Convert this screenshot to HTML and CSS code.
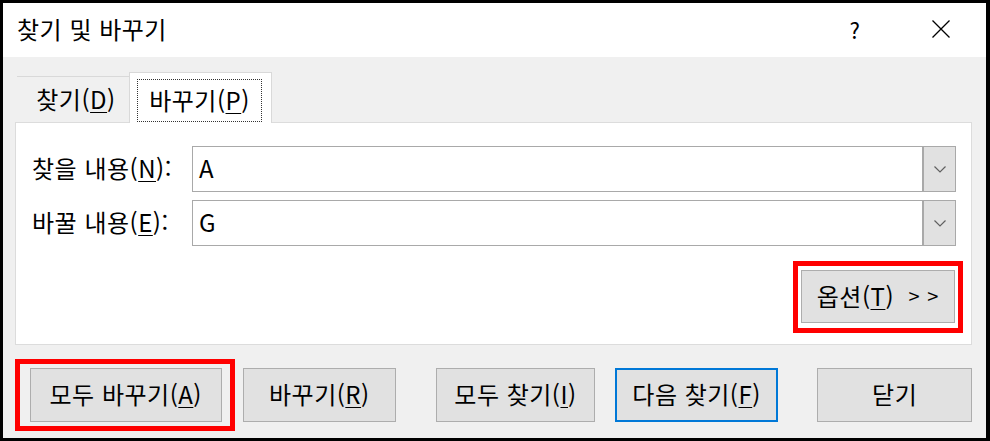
FILE: index.html
```html
<!DOCTYPE html>
<html lang="ko">
<head>
<meta charset="utf-8">
<title>찾기 및 바꾸기</title>
<link rel="stylesheet" href="styles.css">
</head>
<body>
<div class="dialog">
  <div class="titlebar">
    <span class="title">찾기 및 바꾸기</span>
    <span class="help">?</span>
    <span class="close">
      <svg width="18" height="18" viewBox="0 0 18 18"><path d="M0.5 0.5 L17.5 17.5 M17.5 0.5 L0.5 17.5" stroke="#000" stroke-width="1.3" fill="none"/></svg>
    </span>
  </div>
  <div class="body">
    <div class="tabs">
      <div class="tab">찾기(<u>D</u>)</div>
      <div class="tab active"><span class="focus">바꾸기(<u>P</u>)</span></div>
    </div>
    <div class="panel">
      <div class="row">
        <span class="label">찾을 내용(<u>N</u>):</span>
        <div class="combo">
          <span class="val">A</span>
          <span class="drop"><svg width="12" height="7" viewBox="0 0 12 7"><path d="M0.5 0.5 L6 6 L11.5 0.5" stroke="#606060" stroke-width="1.2" fill="none"/></svg></span>
        </div>
      </div>
      <div class="row">
        <span class="label">바꿀 내용(<u>E</u>):</span>
        <div class="combo">
          <span class="val">G</span>
          <span class="drop"><svg width="12" height="7" viewBox="0 0 12 7"><path d="M0.5 0.5 L6 6 L11.5 0.5" stroke="#606060" stroke-width="1.2" fill="none"/></svg></span>
        </div>
      </div>
      <div class="opt-row">
        <div class="btn opt hl-opt">옵션(<u>T</u>)&nbsp;&nbsp;<span class="gt">&gt; &gt;</span></div>
      </div>
    </div>
    <div class="buttons">
      <div class="btn b1 hl-all">모두 바꾸기(<u>A</u>)</div>
      <div class="btn b2">바꾸기(<u>R</u>)</div>
      <div class="btn b3">모두 찾기(<u>I</u>)</div>
      <div class="btn b4 default">다음 찾기(<u>F</u>)</div>
      <div class="btn b5">닫기</div>
    </div>
  </div>
</div>
</body>
</html>
```

FILE: styles.css
```css
* { box-sizing: border-box; }
html, body { margin: 0; padding: 0; }
body {
  width: 990px;
  height: 441px;
  overflow: hidden;
  background: #000;
  font-family: "Noto Sans CJK KR", "Noto Sans", sans-serif;
  font-size: 24px;
  letter-spacing: 0.5px;
  color: #000;
}
u { text-decoration: underline; text-underline-offset: 3px; text-decoration-thickness: 1px; }

.dialog {
  width: 990px;
  height: 441px;
  border-style: solid;
  border-color: #000;
  border-width: 3px 4px 3px 3px;
  background: #f0f0f0;
  display: flex;
  flex-direction: column;
}

.titlebar {
  height: 54px;
  background: #fff;
  display: flex;
  align-items: center;
  padding-left: 14px;
  line-height: 1;
}
.title { flex: 1; padding-bottom: 2px; }
.help { width: 20px; text-align: center; margin-right: 67px; padding-bottom: 2px; font-size: 22px; }
.close { width: 18px; height: 18px; margin-right: 36px; display: flex; margin-top: -2px; }

.body {
  padding: 0 14px 0 12px;
  display: flex;
  flex-direction: column;
}

.tabs {
  margin-top: 15px;
  padding-left: 2px;
  display: flex;
  align-items: flex-end;
  height: 51px;
  margin-bottom: -1px;
}
.tab {
  width: 112px;
  height: 47px;
  border-top: 1px solid #d9d9d9;
  display: flex;
  align-items: center;
  justify-content: center;
  padding-left: 6px;
  padding-bottom: 2px;
  line-height: 1;
}
.tab.active {
  width: 143px;
  height: 51px;
  padding: 6px 9px 1px 7px;
  background: #fff;
  border: 1px solid #d9d9d9;
  border-bottom: none;
  position: relative;
  z-index: 1;
  align-items: stretch;
}
.focus {
  flex: 1;
  border: 1px dotted #333;
  display: flex;
  align-items: center;
  justify-content: center;
  padding-bottom: 2px;
}

.panel {
  width: 957px;
  height: 223px;
  background: #fff;
  border: 1px solid #dcdcdc;
  padding: 23px 15px 0 16px;
  display: flex;
  flex-direction: column;
  gap: 8px;
}
.row { display: flex; align-items: center; height: 46px; }
.label { width: 160px; line-height: 1; padding-bottom: 2px; }
.combo {
  flex: 1;
  height: 46px;
  border: 1px solid #a9a9a9;
  display: flex;
  align-items: stretch;
}
.val { flex: 1; padding-left: 6px; display: flex; align-items: center; line-height: 1; padding-bottom: 2px; }
.drop {
  width: 34px;
  margin: -1px -1px -1px 0;
  background: #e1e1e1;
  border: 1px solid #a9a9a9;
  border-left-width: 2px;
  display: flex;
  align-items: center;
  justify-content: center;
}

.opt-row { display: flex; justify-content: flex-end; margin-top: 16px; padding-right: 1px; }

.btn {
  height: 54px;
  background: #e1e1e1;
  border: 1px solid #adadad;
  display: flex;
  align-items: center;
  justify-content: center;
  line-height: 1;
  padding-bottom: 2px;
  position: relative;
  white-space: nowrap;
}
.btn.opt { width: 154px; height: 53px; }
.gt { font-size: 20px; letter-spacing: 1px; }
.btn.default { border: 2px solid #0078d7; }

.buttons { display: flex; margin-top: 23px; }
.b1 { width: 192px; margin-left: 15px; }
.b2 { width: 154px; margin-left: 21px; }
.b3 { width: 159px; margin-left: 40px; }
.b4 { width: 164px; margin-left: 20px; }
.b5 { width: 155px; margin-left: 39px; }

.hl-opt::after,
.hl-all::after {
  content: "";
  position: absolute;
  border: 5px solid #f00;
  pointer-events: none;
}
.hl-opt::after { left: -9px; top: -10px; right: -9px; bottom: -11px; }
.hl-all::after { left: -16px; top: -10px; right: -14px; bottom: -10px; }
```
